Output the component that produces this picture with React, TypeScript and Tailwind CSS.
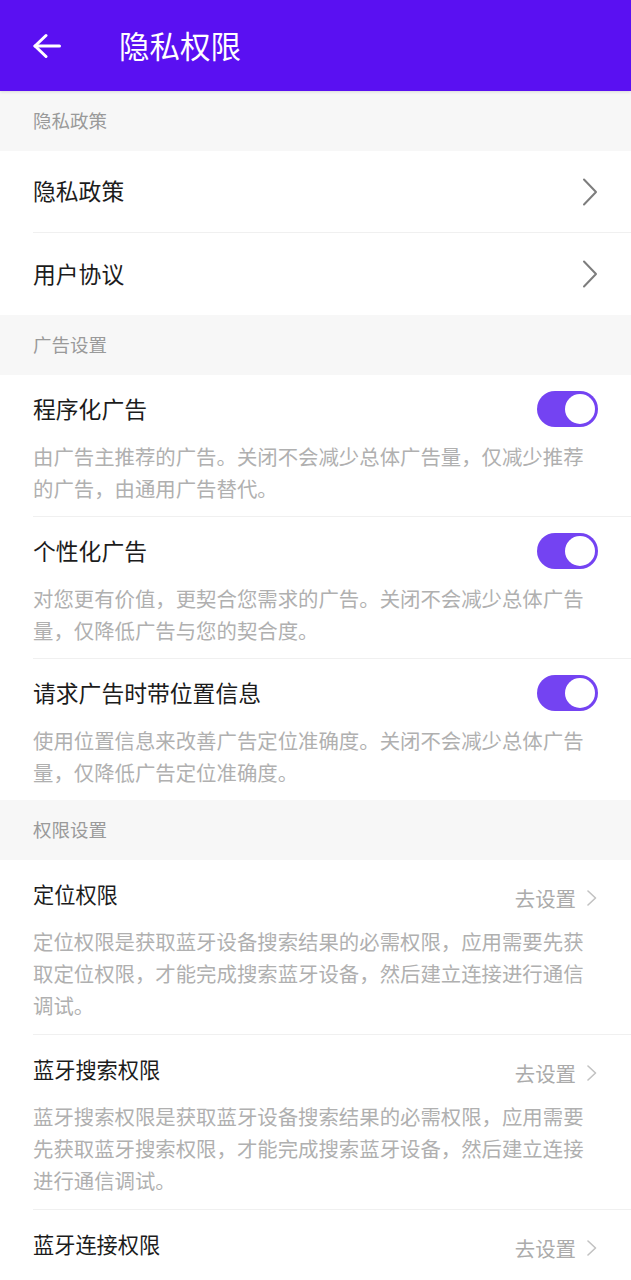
import { useState } from 'react';

const FONT = "font-['Noto_Sans_CJK_SC','Noto_Sans',sans-serif]";

function BackArrow() {
  return (
    <svg width="28" height="26" viewBox="0 0 28 26" fill="none" stroke="white" strokeWidth="3" strokeLinecap="round" strokeLinejoin="round">
      <path d="M26.5 13H2" />
      <path d="M13 2.5L2 13l11 10.5" />
    </svg>
  );
}

function Chevron() {
  return (
    <svg width="16" height="28" viewBox="0 0 16 28" fill="none" stroke="#7d7d7d" strokeWidth="2" strokeLinecap="round" strokeLinejoin="round">
      <path d="M2 1.5L14 14 2 26.5" />
    </svg>
  );
}

function SmallChevron() {
  return (
    <svg width="12" height="16" viewBox="0 0 12 16" fill="none" stroke="#c2c2c2" strokeWidth="1.6" strokeLinecap="round" strokeLinejoin="round">
      <path d="M2 1L9.5 8 2 15" />
    </svg>
  );
}

function SectionHeader({ title }: { title: string }) {
  return (
    <div className="h-[60px] bg-[#f7f7f7] flex items-center px-[33px]">
      <span className="text-[18.5px] text-[#9a9a9a]">{title}</span>
    </div>
  );
}

function LinkRow({ title, divider }: { title: string; divider?: boolean }) {
  return (
    <div className="pl-[33px]">
      <div className={`h-[82px] flex items-center justify-between pr-[33px] ${divider ? 'border-b border-[#f0f0f0]' : ''}`}>
        <span className="text-[22.8px] text-[#1c1c1c]">{title}</span>
        <Chevron />
      </div>
    </div>
  );
}

function Toggle({ on, onChange }: { on: boolean; onChange: () => void }) {
  return (
    <button
      onClick={onChange}
      className={`w-[61px] h-[36px] rounded-full flex items-center px-[3px] ${on ? 'bg-[#7443f2] justify-end' : 'bg-[#d6d6d6] justify-start'}`}
    >
      <span className="w-[30px] h-[30px] rounded-full bg-white block" />
    </button>
  );
}

function ToggleRow({
  title,
  desc,
  on,
  onChange,
  divider,
}: {
  title: string;
  desc: string;
  on: boolean;
  onChange: () => void;
  divider?: boolean;
}) {
  return (
    <div className="pl-[33px]">
      <div className={`pt-[16px] pb-[12px] pr-[33px] ${divider ? 'border-b border-[#f0f0f0]' : ''}`}>
        <div className="h-[36px] flex items-center justify-between">
          <span className="text-[22.8px] text-[#1c1c1c]">{title}</span>
          <Toggle on={on} onChange={onChange} />
        </div>
        <p className="mt-[13px] text-[20.4px] leading-[32px] text-[#b0b0b0]">{desc}</p>
      </div>
    </div>
  );
}

function PermissionRow({ title, desc, divider }: { title: string; desc?: string; divider?: boolean }) {
  return (
    <div className="pl-[33px]">
      <div className={`pt-[16px] pb-[13px] pr-[33px] ${divider ? 'border-b border-[#f0f0f0]' : ''}`}>
        <div className="h-[36px] flex items-center justify-between">
          <span className="text-[21.2px] text-[#1c1c1c]">{title}</span>
          <div className="flex items-center gap-[10px] mt-[8px]">
            <span className="text-[20.4px] text-[#ababab]">去设置</span>
            <SmallChevron />
          </div>
        </div>
        {desc && <p className="mt-[13px] text-[20.4px] leading-[32px] text-[#b0b0b0]">{desc}</p>}
      </div>
    </div>
  );
}

export default function App() {
  const [toggles, setToggles] = useState({ programmatic: true, personal: true, location: true });
  const flip = (k: keyof typeof toggles) => setToggles((p) => ({ ...p, [k]: !p[k] }));

  return (
    <div className={`${FONT} w-full h-[1280px] overflow-hidden bg-white`}>
      {/* Top bar */}
      <div className="h-[91px] bg-[#5a10f2] flex items-center pl-[33px] shadow-[0_1px_3px_rgba(0,0,0,0.12)] relative z-10">
        <BackArrow />
        <h1 className="ml-[58px] text-[30.5px] text-white font-normal">隐私权限</h1>
      </div>

      <SectionHeader title="隐私政策" />
      <LinkRow title="隐私政策" divider />
      <LinkRow title="用户协议" />

      <SectionHeader title="广告设置" />
      <ToggleRow
        title="程序化广告"
        desc="由广告主推荐的广告。关闭不会减少总体广告量，仅减少推荐的广告，由通用广告替代。"
        on={toggles.programmatic}
        onChange={() => flip('programmatic')}
        divider
      />
      <ToggleRow
        title="个性化广告"
        desc="对您更有价值，更契合您需求的广告。关闭不会减少总体广告量，仅降低广告与您的契合度。"
        on={toggles.personal}
        onChange={() => flip('personal')}
        divider
      />
      <ToggleRow
        title="请求广告时带位置信息"
        desc="使用位置信息来改善广告定位准确度。关闭不会减少总体广告量，仅降低广告定位准确度。"
        on={toggles.location}
        onChange={() => flip('location')}
      />

      <SectionHeader title="权限设置" />
      <PermissionRow
        title="定位权限"
        desc="定位权限是获取蓝牙设备搜索结果的必需权限，应用需要先获取定位权限，才能完成搜索蓝牙设备，然后建立连接进行通信调试。"
        divider
      />
      <PermissionRow
        title="蓝牙搜索权限"
        desc="蓝牙搜索权限是获取蓝牙设备搜索结果的必需权限，应用需要先获取蓝牙搜索权限，才能完成搜索蓝牙设备，然后建立连接进行通信调试。"
        divider
      />
      <PermissionRow title="蓝牙连接权限" />
    </div>
  );
}
